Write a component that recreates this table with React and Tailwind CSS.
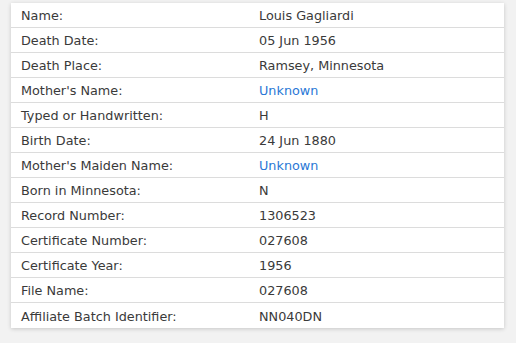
const rows = [
  ['Name:', 'Louis Gagliardi'],
  ['Death Date:', '05 Jun 1956'],
  ['Death Place:', 'Ramsey, Minnesota'],
  ["Mother's Name:", 'Unknown', true],
  ['Typed or Handwritten:', 'H'],
  ['Birth Date:', '24 Jun 1880'],
  ["Mother's Maiden Name:", 'Unknown', true],
  ['Born in Minnesota:', 'N'],
  ['Record Number:', '1306523'],
  ['Certificate Number:', '027608'],
  ['Certificate Year:', '1956'],
  ['File Name:', '027608'],
  ['Affiliate Batch Identifier:', 'NN040DN'],
];

export default function App() {
  return (
    <div className="w-[516px] h-[343px] bg-[#f2f2f2] pt-[3px] pl-[11px] font-['DejaVu_Sans',Verdana,sans-serif] text-[12.8px] text-[#3a3a3a]">
      <div className="w-[493px] bg-white shadow-[0_1px_4px_rgba(0,0,0,0.18)]">
        {rows.map(([label, value, link], i) => (
          <div
            key={label}
            className={`grid grid-cols-[238px_1fr] h-[25px] items-center px-[10px] pt-[2px] ${i < rows.length - 1 ? 'border-b border-[#dcdcdc]' : ''}`}
          >
            <span>{label}</span>
            <span className={link ? 'text-[#2a78d6]' : ''}>{value}</span>
          </div>
        ))}
      </div>
    </div>
  );
}
